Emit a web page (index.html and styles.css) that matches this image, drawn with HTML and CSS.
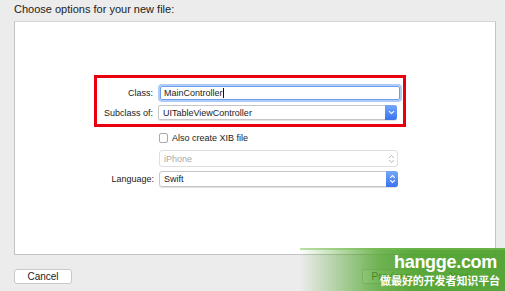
FILE: index.html
```html
<!DOCTYPE html>
<html lang="en">

<head>
  <meta charset="UTF-8">
  <title>New File</title>
  <link rel="stylesheet" href="styles.css">
</head>

<body>
  <div class="sheet">
    <div class="title">Choose options for your new file:</div>
    <div class="panel">
      <div class="form">
        <!-- 紅框標示的兩個欄位 -->
        <div class="mark">
          <div class="row">
            <label class="label">Class:</label>
            <div class="field focus">MainController<span class="caret"></span></div>
          </div>
          <div class="row">
            <label class="label">Subclass of:</label>
            <div class="popup combo">
              <span>UITableViewController</span>
              <span class="arrow">
                <svg width="7" height="5" viewBox="0 0 7 5"><path d="M1 1.2 L3.5 3.6 L6 1.2" fill="none" stroke="#fff" stroke-width="1.1"/></svg>
              </span>
            </div>
          </div>
        </div>
        <div class="rest">
          <div class="row check">
            <span class="label"></span>
            <span class="box"></span>
            <span>Also create XIB file</span>
          </div>
          <div class="row">
            <span class="label"></span>
            <div class="popup disabled">
              <span>iPhone</span>
              <span class="stepper">
                <svg width="7" height="10" viewBox="0 0 7 10"><path d="M1.2 3.8 L3.5 1.5 L5.8 3.8 M1.2 6.2 L3.5 8.5 L5.8 6.2" fill="none" stroke="#b4b4b4" stroke-width="1"/></svg>
              </span>
            </div>
          </div>
          <div class="row">
            <label class="label">Language:</label>
            <div class="popup">
              <span>Swift</span>
              <span class="arrow step">
                <svg width="7" height="10" viewBox="0 0 7 10"><path d="M1.2 3.8 L3.5 1.5 L5.8 3.8 M1.2 6.2 L3.5 8.5 L5.8 6.2" fill="none" stroke="#fff" stroke-width="1.1"/></svg>
              </span>
            </div>
          </div>
        </div>
      </div>
    </div>
    <div class="footer">
      <button class="button">Cancel</button>
      <div class="nav">
        <button class="button">Previous</button>
        <button class="button">Next</button>
      </div>
    </div>
  </div>

  <!-- 浮水印 -->
  <div class="brand">
    <div class="site">hangge.com</div>
    <div class="slogan">做最好的开发者知识平台</div>
  </div>
</body>

</html>
```

FILE: styles.css
```css
* {
  margin: 0px;
  padding: 0px;
  box-sizing: border-box;
}

html,
body {
  height: 100%;
}

body {
  background: #ececec;
  font-family: "Liberation Sans", Arial, "Noto Sans CJK SC", sans-serif;
  font-size: 11px;
  color: #222;
  position: relative;
  overflow: hidden;
}

.sheet {
  padding: 3px 9px 0 14px;
}

.title {
  height: 18px;
  line-height: 13px;
}

/* 白色內容區 */
.panel {
  width: 482px;
  height: 234px;
  background: #fff;
  border: 1px solid #c3c3c3;
  border-top-color: #d6d6d6;
  padding: 53px 0 0 79px;
}

.form {
  width: 312px;
  font-size: 9px;
}

.mark {
  border: 3px solid #e8000f;
  height: 52px;
  padding-top: 6px;
}

.rest {
  padding-left: 3px;
  padding-top: 6px;
}

.row {
  display: flex;
  align-items: center;
  margin-bottom: 4px;
}

.mark .row {
  margin-bottom: 3px;
}

/* 文字太長時往左邊溢出 */
.label {
  width: 56px;
  display: flex;
  justify-content: flex-end;
  white-space: nowrap;
  margin-right: 5px;
  flex: none;
}

.rest .label {
  width: 57px;
}

.field {
  width: 240px;
  height: 14px;
  margin: 2px 2px;
  border: 1px solid #6d9ef0;
  box-shadow: 0 0 0 2px #b0ccf6;
  border-radius: 2px;
  padding-left: 3px;
  line-height: 12px;
  display: flex;
  align-items: center;
}

.caret {
  display: inline-block;
  width: 1px;
  height: 10px;
  background: #111;
}

.popup {
  display: flex;
  align-items: center;
  justify-content: space-between;
  width: 239px;
  height: 16px;
  border: 1px solid #c6c6c6;
  border-radius: 3px;
  padding-left: 4px;
  box-shadow: 0 1px 0 #e2e2e2;
}

.combo {
  height: 15px;
  border-radius: 2px;
}

.arrow {
  width: 12px;
  height: calc(100% + 2px);
  margin-right: -1px;
  background: linear-gradient(#74a8fb, #3a73ee);
  border-radius: 0 3px 3px 0;
  display: flex;
  align-items: center;
  justify-content: center;
}

.disabled {
  border-color: #dedede;
  color: #a8a8a8;
  box-shadow: none;
  height: 17px;
}

.stepper {
  width: 12px;
  display: flex;
  justify-content: center;
}

.check {
  height: 10px;
  margin-bottom: 7px;
}

.box {
  width: 9px;
  height: 10px;
  border: 1px solid #a9a9a9;
  border-radius: 2px;
  margin-right: 4px;
}

.footer {
  display: flex;
  justify-content: space-between;
  padding-top: 14px;
}

.nav {
  display: flex;
  gap: 10px;
  padding-right: 8px;
}

.button {
  font: inherit;
  font-size: 10px;
  color: #222;
  width: 58px;
  height: 15px;
  background: #fff;
  border: 1px solid #c9c9c9;
  border-radius: 3px;
  line-height: 13px;
}

/* 浮水印 */
.brand {
  position: absolute;
  right: 0;
  bottom: 0;
  width: 205px;
  height: 43px;
  background: linear-gradient(to right, rgba(90, 170, 50, 0) 0%, rgba(80, 165, 45, .8) 38%, rgba(74, 160, 40, .9) 55%, rgba(74, 159, 42, .92) 100%);
  border-top: 2px solid rgba(120, 190, 80, .5);
  color: #fff;
  text-align: right;
  padding-right: 5px;
}

.site {
  font-family: "Liberation Sans", Arial, sans-serif;
  font-weight: bold;
  font-size: 18px;
  letter-spacing: -0.3px;
  line-height: 20px;
  padding-top: 2px;
  padding-right: 3px;
}

.slogan {
  font-family: "Noto Sans CJK SC", sans-serif;
  font-weight: bold;
  font-size: 11px;
  line-height: 17px;
  letter-spacing: -0.1px;
}
```
